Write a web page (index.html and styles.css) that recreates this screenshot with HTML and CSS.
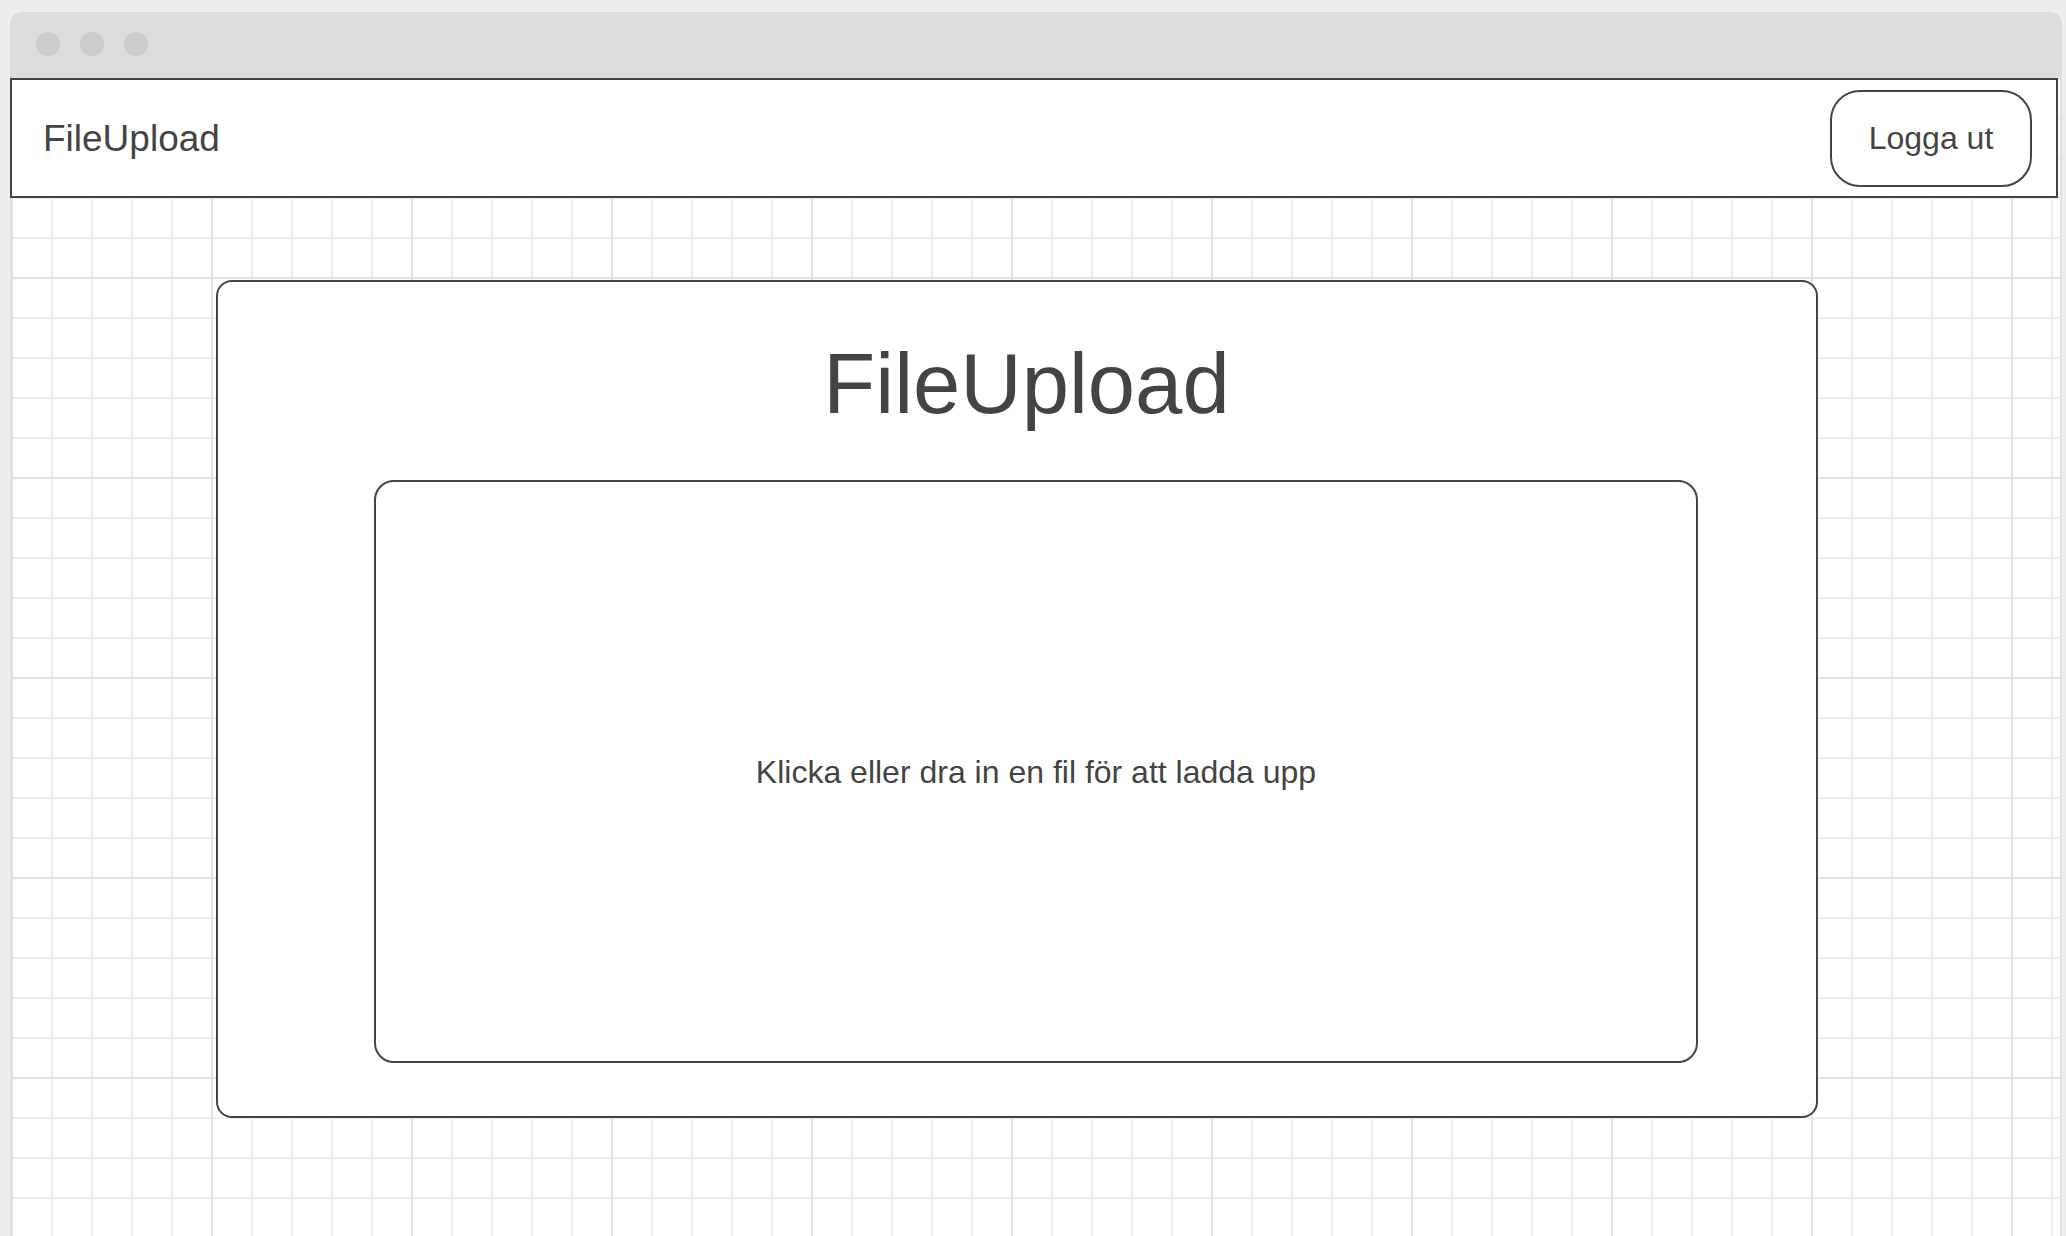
FILE: index.html
```html
<!DOCTYPE html>
<html lang="sv">
<head>
<meta charset="utf-8">
<title>FileUpload</title>
<link rel="stylesheet" href="styles.css">
</head>
<body>
<div class="window">
  <div class="titlebar">
    <span class="dot"></span>
    <span class="dot"></span>
    <span class="dot"></span>
  </div>
  <div class="viewport">
    <header class="navbar">
      <div class="brand">FileUpload</div>
      <button class="logout">Logga ut</button>
    </header>
    <main class="card">
      <h1 class="title">FileUpload</h1>
      <div class="dropzone">Klicka eller dra in en fil för att ladda upp</div>
    </main>
  </div>
</div>
</body>
</html>
```

FILE: styles.css
```css
* {
  box-sizing: border-box;
}

html, body {
  margin: 0;
  padding: 0;
  height: 100%;
  overflow: hidden;
}

body {
  background: #eeeeee;
  font-family: "Liberation Sans", Arial, sans-serif;
  color: #444444;
}

.window {
  margin: 12px 0 0 10px;
  width: 2052px;
  height: calc(100vh - 12px);
  border-radius: 12px 12px 0 0;
  overflow: hidden;
  display: flex;
  flex-direction: column;
}

.titlebar {
  height: 66px;
  flex: none;
  background: #dddddd;
  display: flex;
  align-items: center;
  gap: 20px;
  padding-left: 26px;
  padding-bottom: 2px;
}

.dot {
  width: 24px;
  height: 24px;
  border-radius: 50%;
  background: #cccccc;
}

.viewport {
  flex: 1;
  border-left: 2px solid #e0e0e0;
  border-right: 2px solid #e0e0e0;
  background-color: #ffffff;
  background-image:
    linear-gradient(to right, #e2e2e2 2px, transparent 2px),
    linear-gradient(to bottom, #e2e2e2 2px, transparent 2px),
    linear-gradient(to right, #eeeeee 2px, transparent 2px),
    linear-gradient(to bottom, #eeeeee 2px, transparent 2px);
  background-size: 200px 200px, 200px 200px, 40px 40px, 40px 40px;
  background-position: 199px 199px, 199px 199px, 39px 39px, 39px 39px;
  display: flex;
  flex-direction: column;
  align-items: flex-start;
}

.navbar {
  margin-left: -2px;
  width: 2048px;
  height: 120px;
  flex: none;
  border: 2px solid #444444;
  background: #ffffff;
  display: flex;
  align-items: center;
  justify-content: space-between;
  padding: 0 24px 0 31px;
}

.brand {
  font-size: 37px;
  line-height: 1;
  color: #444444;
}

.logout {
  width: 202px;
  height: 97px;
  border: 2px solid #444444;
  border-radius: 30px;
  background: #ffffff;
  font-family: "Liberation Sans", Arial, sans-serif;
  font-size: 32px;
  color: #444444;
  padding: 0;
  margin-top: 1px;
}

.card {
  margin: 82px 0 0 204px;
  width: 1602px;
  height: 838px;
  flex: none;
  border: 2px solid #444444;
  border-radius: 16px;
  background: #ffffff;
  padding: 60px 118px 53px 156px;
  display: flex;
  flex-direction: column;
}

.title {
  margin: 0;
  font-size: 85px;
  line-height: 84px;
  font-weight: normal;
  text-align: center;
  padding-right: 19px;
  color: #444444;
}

.dropzone {
  margin-top: 54px;
  height: 583px;
  border: 2px solid #444444;
  border-radius: 20px;
  display: flex;
  align-items: center;
  justify-content: center;
  padding-top: 1px;
  font-size: 32px;
  color: #444444;
}
```
